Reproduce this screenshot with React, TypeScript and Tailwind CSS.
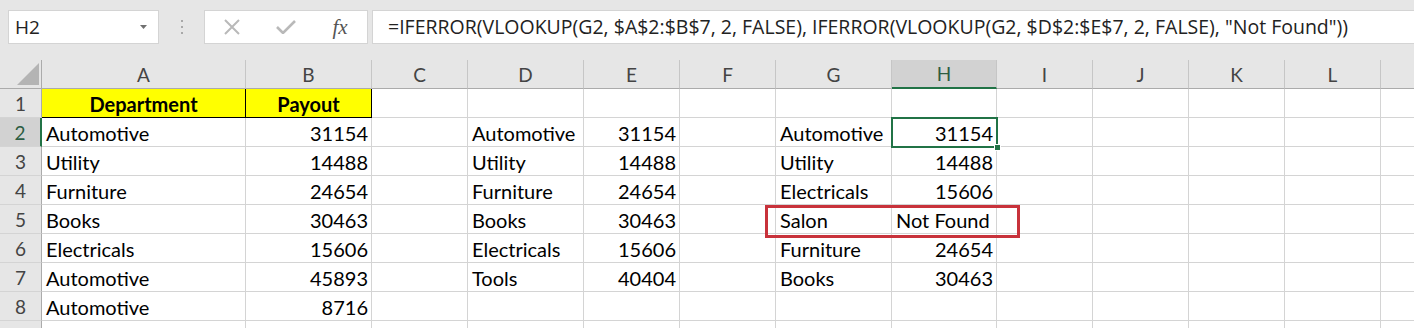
import React from 'react';

const COLS: { id: string; label: string }[] = [
  { id: 'A', label: 'A' },
  { id: 'B', label: 'B' },
  { id: 'C', label: 'C' },
  { id: 'D', label: 'D' },
  { id: 'E', label: 'E' },
  { id: 'F', label: 'F' },
  { id: 'G', label: 'G' },
  { id: 'H', label: 'H' },
  { id: 'I', label: 'I' },
  { id: 'J', label: 'J' },
  { id: 'K', label: 'K' },
  { id: 'L', label: 'L' },
  // M is scrolled mostly out of view; its letter is off-screen
  { id: 'M', label: '' },
];

const DATA: Record<number, Record<string, string>> = {
  1: { A: 'Department', B: 'Payout' },
  2: { A: 'Automotive', B: '31154', D: 'Automotive', E: '31154', G: 'Automotive', H: '31154' },
  3: { A: 'Utility', B: '14488', D: 'Utility', E: '14488', G: 'Utility', H: '14488' },
  4: { A: 'Furniture', B: '24654', D: 'Furniture', E: '24654', G: 'Electricals', H: '15606' },
  5: { A: 'Books', B: '30463', D: 'Books', E: '30463', G: 'Salon', H: 'Not Found' },
  6: { A: 'Electricals', B: '15606', D: 'Electricals', E: '15606', G: 'Furniture', H: '24654' },
  7: { A: 'Automotive', B: '45893', D: 'Tools', E: '40404', G: 'Books', H: '30463' },
  8: { A: 'Automotive', B: '8716' },
};

const ROWS = [1, 2, 3, 4, 5, 6, 7, 8, 9];
const FORMULA = '=IFERROR(VLOOKUP(G2, $A$2:$B$7, 2, FALSE), IFERROR(VLOOKUP(G2, $D$2:$E$7, 2, FALSE), "Not Found"))';

function Cell({ row, col }: { row: number; col: string }) {
  const v = DATA[row]?.[col] ?? '';
  const header = row === 1 && (col === 'A' || col === 'B');
  if (header) {
    return (
      <div className="h-[29px] bg-[#ffff00] border-r border-b border-black flex items-end justify-center pb-[3px] font-bold text-black">
        <span className="leading-[20px]">{v}</span>
      </div>
    );
  }
  const num = /^\d+$/.test(v);
  return (
    <div
      className={
        'h-[29px] border-r border-b border-[#d4d4d4] flex items-end pb-[3px] text-black whitespace-nowrap ' +
        (num ? 'justify-end pr-[3px]' : 'justify-start pl-[4px]')
      }
    >
      <span className="leading-[20px]">{v}</span>
    </div>
  );
}

export default function App() {
  return (
    <div className="w-[1414px] h-[328px] bg-[#e6e6e6] overflow-hidden font-['Lato',sans-serif]">
      {/* formula bar */}
      <div className="h-[60px] flex items-start pt-[10px] pl-[8px]">
        <div className="w-[151px] h-[34px] bg-white border border-[#d4d4d4] flex items-center justify-between pl-[6px] pr-[11px] font-['Open_Sans',sans-serif] text-[19px] text-[#222]">
          <span>H2</span>
          <svg width="7" height="4" viewBox="0 0 7 4">
            <polygon points="0,0 7,0 3.5,4" fill="#707070" />
          </svg>
        </div>
        <div className="w-[45px] h-[34px] flex flex-col items-center justify-center gap-[4px]">
          <span className="w-[2px] h-[2px] bg-[#a8a8a8]" />
          <span className="w-[2px] h-[2px] bg-[#a8a8a8]" />
          <span className="w-[2px] h-[2px] bg-[#a8a8a8]" />
        </div>
        <div className="w-[164px] h-[34px] bg-white border border-[#d4d4d4] flex items-center">
          <div className="w-[54px] flex justify-center">
            <svg width="18" height="16" viewBox="0 0 18 16">
              <path d="M2 1 L16 15 M16 1 L2 15" stroke="#b9b9b9" strokeWidth="2" fill="none" />
            </svg>
          </div>
          <div className="w-[54px] flex justify-center">
            <svg width="20" height="14" viewBox="0 0 20 14">
              <path d="M1 7 L7 13 L19 1" stroke="#b9b9b9" strokeWidth="2.6" fill="none" />
            </svg>
          </div>
          <div className="w-[54px] flex justify-center font-['Liberation_Serif',serif] italic text-[21px] leading-none text-[#555]">
            fx
          </div>
        </div>
        <div className="flex-1 ml-[4px] h-[34px] bg-white border-y border-l border-[#d4d4d4] flex items-center pl-[15px] font-['Open_Sans',sans-serif] text-[19.5px] text-[#222] whitespace-nowrap overflow-hidden">
          {FORMULA}
        </div>
      </div>

      {/* grid */}
      <div className="relative grid w-max grid-cols-[42px_204px_126px_96px_116px_96px_96px_116px_105px_96px_96px_96px_96px_96px] bg-white text-[20px]">
        {/* corner */}
        <div className="h-[29px] bg-[#e6e6e6] border-r border-b border-[#ababab] flex items-end justify-end pr-[2px] pb-[3px]">
          <svg width="22" height="22" viewBox="0 0 22 22">
            <polygon points="22,0 22,22 0,22" fill="#b4b4b4" />
          </svg>
        </div>
        {COLS.map((c) => (
          <div
            key={c.id}
            className={
              'h-[29px] flex items-end justify-center pb-[3px] border-r text-[19px] ' +
              (c.id === 'H'
                ? 'bg-[#d2d2d2] border-r-[#c6c6c6] border-b-2 border-b-[#217346] text-[#2c5d42]'
                : 'bg-[#e6e6e6] border-r-[#c6c6c6] border-b border-b-[#ababab] text-[#444]')
            }
          >
            <span className="leading-[20px]">{c.label}</span>
          </div>
        ))}

        {ROWS.map((r) => (
          <React.Fragment key={r}>
            <div
              className={
                'h-[29px] flex items-end justify-center pb-[3px] border-b border-b-[#d4d4d4] text-[19px] ' +
                (r === 2
                  ? 'bg-[#d2d2d2] border-r-2 border-r-[#217346] text-[#2c5d42]'
                  : 'bg-[#e6e6e6] border-r border-r-[#ababab] text-[#444]')
              }
            >
              <span className="leading-[20px]">{r < 9 ? r : ''}</span>
            </div>
            {COLS.map((c) => (
              <Cell key={c.id} row={r} col={c.id} />
            ))}
          </React.Fragment>
        ))}

        {/* active cell H2 */}
        <div className="absolute left-[891px] top-[57px] w-[107px] h-[31px] border-2 border-[#217346] pointer-events-none" />
        <div className="absolute left-[994px] top-[84px] w-[7px] h-[7px] bg-[#217346] border border-white" />

        {/* highlight box */}
        <div className="absolute left-[765px] top-[145px] w-[255px] h-[33px] border-[3px] border-[#c8323b]" />
      </div>
    </div>
  );
}
